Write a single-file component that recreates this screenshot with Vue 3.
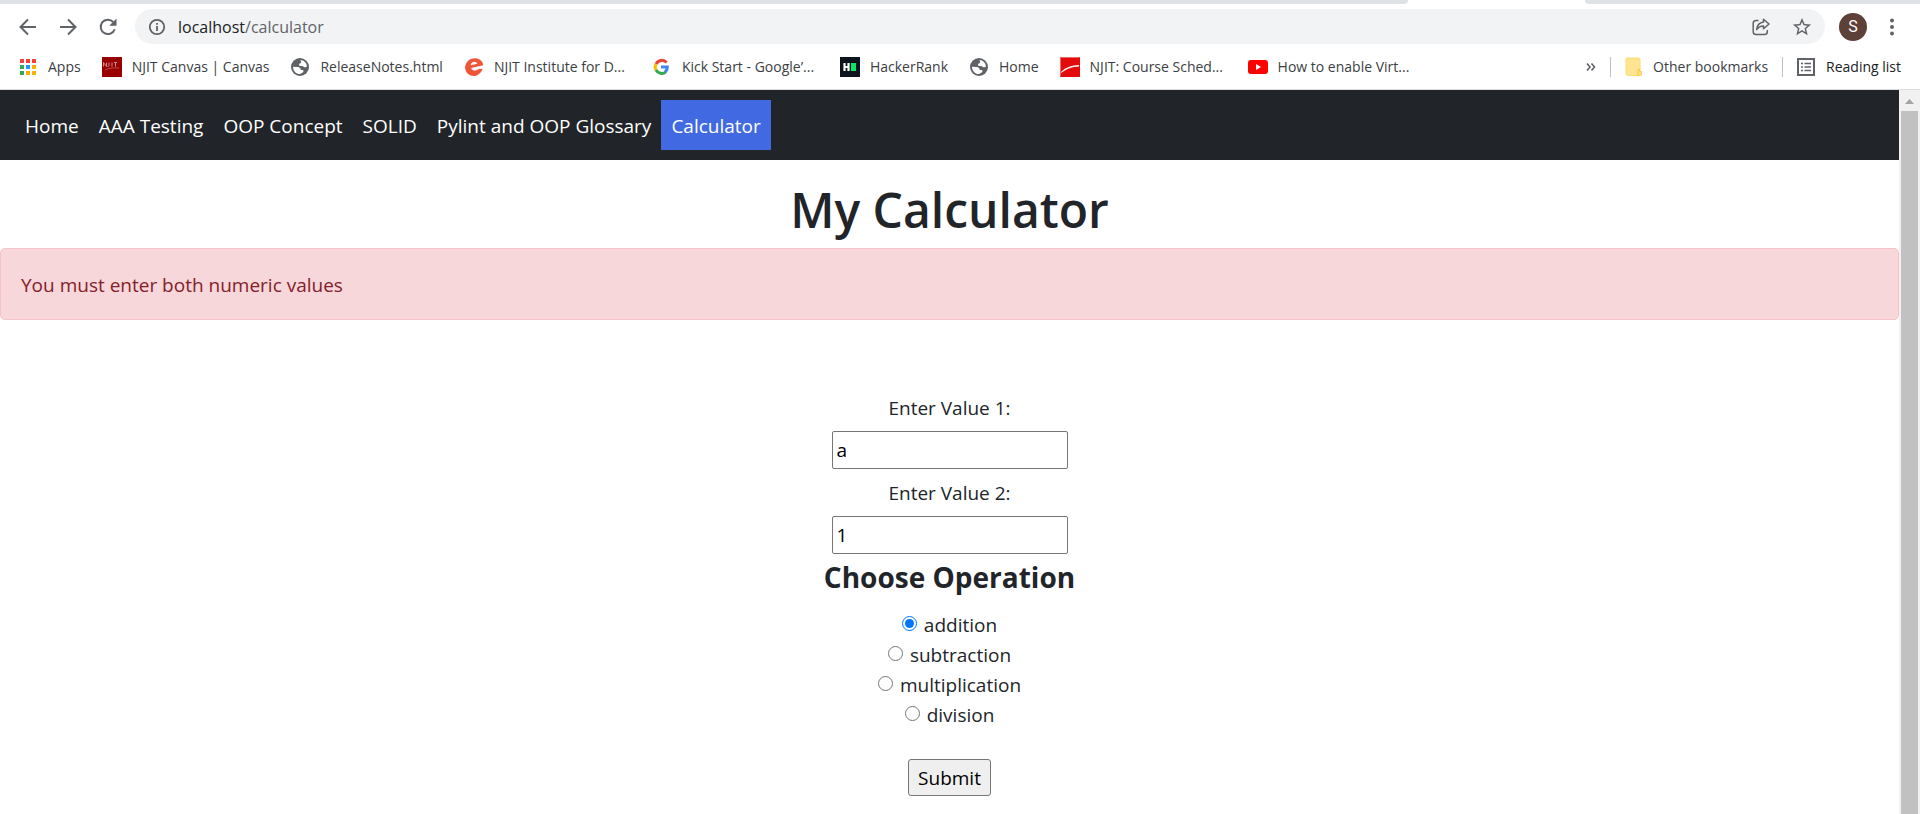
<script setup>
import { ref } from 'vue'

const bookmarks = [
  { icon: 'apps', label: 'Apps' },
  { icon: 'canvas', label: 'NJIT Canvas | Canvas' },
  { icon: 'globe', label: 'ReleaseNotes.html' },
  { icon: 'eventbrite', label: 'NJIT Institute for D...', long: true },
  { icon: 'google', label: 'Kick Start - Google’...', long: true },
  { icon: 'hackerrank', label: 'HackerRank' },
  { icon: 'globe', label: 'Home' },
  { icon: 'njit', label: 'NJIT: Course Sched...', long: true },
  { icon: 'youtube', label: 'How to enable Virt...', long: true }
]

const appDots = ['#f44336', '#f44336', '#f44336', '#34a853', '#2196f3', '#fbaf00', '#34a853', '#fbaf00', '#fbaf00']

const links = ['Home', 'AAA Testing', 'OOP Concept', 'SOLID', 'Pylint and OOP Glossary', 'Calculator']
const activeLink = 'Calculator'

const operations = ['addition', 'subtraction', 'multiplication', 'division']

const value1 = ref('a')
const value2 = ref('1')
const operation = ref('addition')
</script>

<template>
  <div class="window">
    <header class="chrome">
      <div class="tabs">
        <span class="tabs-left"></span>
        <span class="tabs-right"></span>
      </div>

      <div class="toolbar">
        <button class="tool" type="button" aria-label="Back">
          <svg width="18" height="18" viewBox="0 0 18 18"><path d="M17 9H2M9 1.5 1.5 9 9 16.500" fill="none" stroke="#5f6368" stroke-width="2" /></svg>
        </button>
        <button class="tool" type="button" aria-label="Forward">
          <svg width="18" height="18" viewBox="0 0 18 18"><path d="M1 9h15M9 1.500 16.500 9 9 16.500" fill="none" stroke="#5f6368" stroke-width="2" /></svg>
        </button>
        <button class="tool" type="button" aria-label="Reload">
          <svg width="18" height="18" viewBox="0 0 18 18">
            <path d="M15.700 11.200A7.200 7.200 0 1 1 14.200 4" fill="none" stroke="#5f6368" stroke-width="2" />
            <path d="M17.500.500v7.300h-7.300z" fill="#5f6368" />
          </svg>
        </button>

        <div class="omnibox">
          <svg width="18" height="18" viewBox="0 0 18 18">
            <circle cx="9" cy="9" r="7.200" fill="none" stroke="#5f6368" stroke-width="1.800" />
            <path d="M8.100 8h1.800v5H8.100zM8.100 5h1.800v1.800H8.100z" fill="#5f6368" />
          </svg>
          <span class="url">localhost<span class="path">/calculator</span></span>
          <button class="tool share" type="button" aria-label="Share this page">
            <svg width="18" height="18" viewBox="0 0 18 18">
              <path d="M6.500 2.500H4a2.800 2.800 0 0 0-2.800 2.800v8.400A2.800 2.800 0 0 0 4 16.500h8.500a2.800 2.800 0 0 0 2.800-2.800V12" fill="none" stroke="#5f6368" stroke-width="1.500" />
              <path d="M11.500 1.300 17 6l-5.500 4.700V8C8.500 8 6.400 9 4.600 11.700 5 7.500 7.500 4.600 11.500 4z" fill="none" stroke="#5f6368" stroke-width="1.500" stroke-linejoin="round" />
            </svg>
          </button>
          <button class="tool" type="button" aria-label="Bookmark this tab">
            <svg width="20" height="20" viewBox="1 1 22 22"><path fill="#5f6368" d="M22 9.240l-7.190-.620L12 2 9.190 8.630 2 9.240l5.460 4.730L5.820 21 12 17.270 18.180 21l-1.630-7.030L22 9.240zM12 15.400l-3.760 2.270 1-4.280-3.320-2.880 4.380-.380L12 6.100l1.710 4.040 4.380.380-3.320 2.880 1 4.280L12 15.400z" /></svg>
          </button>
        </div>

        <button class="avatar" type="button" aria-label="Profile">S</button>
        <button class="tool" type="button" aria-label="Menu">
          <svg width="18" height="18" viewBox="0 0 18 18"><g fill="#5f6368"><circle cx="9" cy="2.500" r="2" /><circle cx="9" cy="9" r="2" /><circle cx="9" cy="15.500" r="2" /></g></svg>
        </button>
      </div>

      <div class="bookmarks">
        <a v-for="(b, i) in bookmarks" :key="i" class="bookmark" :class="{ long: b.long }" href="#">
          <svg width="20" height="20" viewBox="0 0 20 20" aria-hidden="true">
            <g v-if="b.icon === 'apps'">
              <rect v-for="(c, n) in appDots" :key="n" :x="2 + (n % 3) * 6" :y="2 + Math.floor(n / 3) * 6" width="4" height="4" :fill="c" />
            </g>
            <g v-else-if="b.icon === 'canvas'">
              <rect width="20" height="20" fill="#980000" />
              <path d="M1.500 5.500v4M1.500 5.500l3 4v-4M7 5.500v3q0 1-1.500 1M10 5.500v4M13.500 5.500v4M12 5.500h3" fill="none" stroke="#cf8d8d" />
              <path d="M3 13c4-2 8-2.500 14-2" fill="none" stroke="#c06060" stroke-width=".800" />
            </g>
            <g v-else-if="b.icon === 'globe'">
              <circle cx="10" cy="10" r="9" fill="#5f6368" />
              <path d="M10.500 3A7 7 0 0 1 17 9.500c-1 .900-2.500 1-3.500.200-.900-.800-2-.700-3-.700-1.200 0-1.800-1-1.300-2 .400-.900 2-.600 2-2 0-.700-.700-1.200-.700-2zM3 9.800l4.600.200c2 .200 3.200 1.300 3.200 3h1.900c1 0 1 1.500.300 2.300-.600.800-1.900.700-2.300 1.600H8.300C5.200 16.200 3 13.300 3 9.800z" fill="#fff" />
            </g>
            <g v-else-if="b.icon === 'eventbrite'">
              <path d="M7.500 1.800C12 .100 17 1.800 18.700 6c.300.900.500 1.700.400 2.300L7.200 11c.700 2.300 3 3 5.200 2.300 1.500-.500 2.200-1.300 3-1.500l3.200.300c-.900 3-3 5.200-5.900 6.300C8 20 3 17.800 1.500 13 .200 8.500 2.500 3.700 7.500 1.800zM6.800 8.300l6.500-1.500c-.700-1.600-2.300-2.300-4-1.800-1.700.400-2.600 1.700-2.500 3.300z" fill="#f05537" />
            </g>
            <g v-else-if="b.icon === 'google'" fill="none" stroke-width="3">
              <path d="M4 7a6.500 6.500 0 0 1 10.600-1.600" stroke="#ea4335" />
              <path d="M4 7a6.500 6.500 0 0 0 0 6.200" stroke="#fbbc05" />
              <path d="M4 13a6.500 6.500 0 0 0 10 1.800" stroke="#34a853" />
              <path d="M9 10h6.300c0 2-.700 3.700-2.200 4.800" stroke="#4285f4" />
            </g>
            <g v-else-if="b.icon === 'hackerrank'">
              <rect width="20" height="20" fill="#0e141e" />
              <path d="M4.500 6v8M8.500 6v8M4.500 10h4" stroke="#fff" stroke-width="2.200" />
              <rect x="11" y="6" width="5" height="8" fill="#00ea64" />
            </g>
            <g v-else-if="b.icon === 'njit'">
              <rect width="20" height="20" fill="#e30b0b" />
              <path d="M.500 19.500V.500h19" fill="none" stroke="#ef6a6a" />
              <path d="M1 15C6 10 12 8.500 19 8v1.500C12 10 7 11.500 1 16z" fill="#fff" />
            </g>
            <g v-else>
              <rect y="3" width="20" height="14" rx="3" fill="#f00" />
              <path d="M8 7v6l5-3z" fill="#fff" />
            </g>
          </svg>
          <span class="bookmark-label">{{ b.label }}</span>
        </a>

        <button class="more" type="button" aria-label="More bookmarks">
          <svg width="10" height="8" viewBox="0 0 10 8"><path d="M1 .500 4 4 1 7.500M5.500.500l3 3.500-3 3.500" fill="none" stroke="#5f6368" stroke-width="1.600" /></svg>
        </button>
        <span class="divider"></span>
        <a class="bookmark" href="#">
          <svg width="18" height="20" viewBox="0 0 18 20" aria-hidden="true">
            <path d="M2 1h11a2 2 0 0 1 2 2v15.500H3.500A2.500 2.500 0 0 1 1 16V2a1 1 0 0 1 1-1z" fill="#ffe591" stroke="#fbdc6c" />
            <path d="M12.500 18.500v-4.500a2 2 0 0 1 2-2v2.500H16.500v3a1 1 0 0 1-1 1z" fill="#ffe070" stroke="#f2c94c" stroke-width=".800" />
          </svg>
          <span>Other bookmarks</span>
        </a>
        <span class="divider"></span>
        <button class="bookmark reading" type="button">
          <svg width="18" height="18" viewBox="0 0 18 18" aria-hidden="true">
            <rect x="1" y="1" width="16" height="16" fill="none" stroke="#5f6368" stroke-width="2" />
            <path d="M4 5.500h2M4 9h2M4 12.500h2M7.500 5.500H14M7.500 9H14M7.500 12.500H14" stroke="#5f6368" stroke-width="1.600" />
          </svg>
          <span>Reading list</span>
        </button>
      </div>
    </header>

    <div class="viewport">
      <div class="page">
        <nav class="navbar">
          <a v-for="link in links" :key="link" href="#" class="nav-link" :class="{ active: link === activeLink }">{{ link }}</a>
        </nav>

        <h1>My Calculator</h1>
        <div class="alert" role="alert">You must enter both numeric values</div>

        <form class="calculator" @submit.prevent>
          <label class="field-label" for="value1">Enter Value 1:</label>
          <input id="value1" v-model="value1" class="field" type="text">
          <label class="field-label" for="value2">Enter Value 2:</label>
          <input id="value2" v-model="value2" class="field" type="text">

          <h2>Choose Operation</h2>
          <div v-for="op in operations" :key="op" class="choice">
            <input :id="op" v-model="operation" type="radio" name="operation" :value="op">
            <label :for="op">{{ op }}</label>
          </div>

          <button class="submit" type="submit">Submit</button>
        </form>
      </div>

      <div class="scrollbar" aria-hidden="true">
        <svg width="21" height="21" viewBox="0 0 21 21"><path d="M6 14 10.500 9 15 14z" fill="#a3a3a3" /></svg>
        <span class="thumb"></span>
      </div>
    </div>
  </div>
</template>

<style>
body {
  margin: 0;
  overflow: hidden;
}
</style>

<style scoped>
* {
  box-sizing: border-box;
}

.window {
  display: flex;
  flex-direction: column;
  height: 100vh;
  background: #fff;
  color: #212529;
  font-family: "Open Sans", "Noto Sans", sans-serif;
  font-size: 19px;
  line-height: 30px;
}

button {
  font-family: inherit;
  cursor: pointer;
}

.chrome {
  flex: none;
  border-bottom: 1px solid #dadce0;
}

.tabs {
  display: flex;
  justify-content: space-between;
  height: 4px;
}

.tabs-left,
.tabs-right {
  background: #dee1e6;
}

.tabs-left {
  width: 1408px;
  border-bottom-right-radius: 8px;
}

.tabs-right {
  width: 335px;
  border-bottom-left-radius: 8px;
}

.toolbar {
  display: flex;
  align-items: center;
  gap: 22px;
  padding: 5px 19px 1px;
}

.tool {
  display: flex;
  padding: 0;
  border: 0;
  background: none;
}

.omnibox {
  display: flex;
  flex: 1;
  align-items: center;
  gap: 12px;
  height: 35px;
  margin-left: -4px;
  margin-right: -8px;
  padding: 0 13px;
  border-radius: 18px;
  background: #f1f3f4;
}

.url {
  flex: 1;
  color: #202124;
  font-size: 16px;
}

.path {
  color: #5f6368;
}

.share {
  margin-right: 10px;
}

.avatar {
  width: 28px;
  height: 28px;
  margin-right: -6px;
  padding: 0;
  border: 0;
  border-radius: 50%;
  background: #5d4037;
  color: #fff;
  font-family: Roboto, sans-serif;
  font-size: 16px;
  line-height: 28px;
}

.bookmarks {
  display: flex;
  align-items: center;
  height: 44px;
  padding: 0 19px 0 18px;
}

.bookmark {
  display: flex;
  align-items: center;
  gap: 10px;
  margin-right: 21px;
  padding: 0;
  border: 0;
  background: none;
  color: #3c4043;
  font-size: 14px;
  line-height: 20px;
  text-decoration: none;
  white-space: nowrap;
}

.bookmark svg {
  flex: none;
}

.bookmark.long .bookmark-label {
  width: 137px;
}

.more {
  display: flex;
  margin-left: auto;
  margin-right: 14px;
  padding: 0;
  border: 0;
  background: none;
}

.divider {
  width: 1px;
  height: 20px;
  margin-right: 14px;
  background: #bdc1c6;
}

.divider + .bookmark {
  margin-right: 14px;
}

.bookmark.reading {
  gap: 11px;
  margin-right: 0;
  color: #202124;
}

.viewport {
  display: flex;
  flex: 1;
  min-height: 0;
}

.page {
  flex: 1;
  min-width: 0;
  overflow: hidden;
}

.navbar {
  display: flex;
  padding: 10px 15px;
  background: #212529;
}

.nav-link {
  padding: 11px 10px 9px;
  color: #fff;
  text-decoration: none;
  white-space: nowrap;
}

.nav-link.active {
  background: #4169e1;
}

h1 {
  margin: 20px 0 8px;
  font-size: 48px;
  font-weight: 600;
  line-height: 60px;
  text-align: center;
}

.alert {
  padding: 21px 20px 19px;
  border: 1px solid #f5c2c7;
  border-radius: 5px;
  background: #f8d7da;
  color: #842029;
}

.calculator {
  display: flex;
  flex-direction: column;
  align-items: center;
  padding-top: 73px;
}

.field-label {
  margin-bottom: 8px;
}

.field {
  width: 236px;
  height: 38px;
  margin-bottom: 9px;
  padding: 1px 4px;
  border: 1px solid #767676;
  border-radius: 2px;
  background: #fff;
  color: #000;
  font-family: inherit;
  font-size: 19px;
}

h2 {
  margin: 0 0 19px;
  font-size: 28px;
  font-weight: 700;
  line-height: 28px;
}

.choice {
  display: flex;
  align-items: center;
  gap: 7px;
}

.choice input {
  width: 15px;
  height: 15px;
  margin: 0 0 3px;
  accent-color: #0075ff;
}

.submit {
  height: 37px;
  margin-top: 29px;
  padding: 0 9px;
  border: 1px solid #767676;
  border-radius: 3px;
  background: #efefef;
  color: #000;
  font-size: 19px;
}

.scrollbar {
  display: flex;
  flex: none;
  flex-direction: column;
  width: 21px;
  background: #f1f1f1;
}

.thumb {
  flex: 1;
  margin: 0 2px;
  background: #c1c1c1;
}
</style>
